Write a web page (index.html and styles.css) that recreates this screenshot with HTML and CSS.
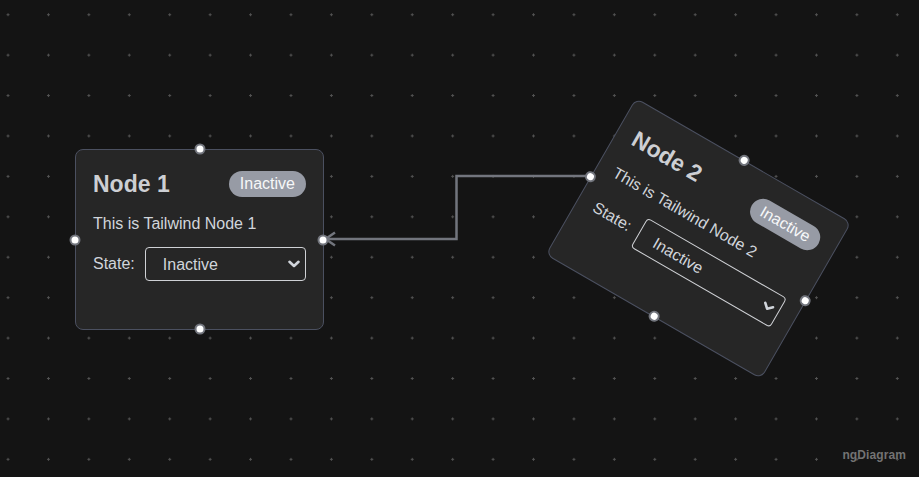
FILE: index.html
```html
<!DOCTYPE html>
<html lang="en">
<head>
  <meta charset="UTF-8">
  <meta name="viewport" content="width=device-width, initial-scale=1.0">
  <title>ngDiagram - Tailwind Nodes</title>
  <link rel="stylesheet" href="styles.css">
</head>
<body>
  <div class="canvas">
    <!-- Edge: Node 2 (left port) -> Node 1 (right port) -->
    <svg class="edges" width="919" height="477" viewBox="0 0 919 477">
      <path class="edge" d="M590 176 L456.5 176 L456.5 239 L325 239" />
      <path class="edge" d="M335 232.5 L325.5 239 L335 245.5" />
    </svg>

    <!-- Node 1 -->
    <div class="node node-1">
      <div class="node-header">
        <h3 class="node-title">Node 1</h3>
        <span class="badge">Inactive</span>
      </div>
      <p class="node-desc">This is Tailwind Node 1</p>
      <div class="state-row">
        <label for="state-1">State:</label>
        <div class="select-wrap">
          <select id="state-1">
            <option>Inactive</option>
            <option>Active</option>
          </select>
          <svg class="chevron" width="12" height="8" viewBox="0 0 12 8">
            <path d="M1.5 1.8 L6 6 L10.5 1.8" />
          </svg>
        </div>
      </div>
      <span class="port port-top"></span>
      <span class="port port-left"></span>
      <span class="port port-right"></span>
      <span class="port port-bottom"></span>
    </div>

    <!-- Node 2 (rotated) -->
    <div class="node node-2">
      <div class="node-header">
        <h3 class="node-title">Node 2</h3>
        <span class="badge">Inactive</span>
      </div>
      <p class="node-desc">This is Tailwind Node 2</p>
      <div class="state-row">
        <label for="state-2">State:</label>
        <div class="select-wrap">
          <select id="state-2">
            <option>Inactive</option>
            <option>Active</option>
          </select>
          <svg class="chevron" width="12" height="8" viewBox="0 0 12 8">
            <path d="M1.5 1.8 L6 6 L10.5 1.8" />
          </svg>
        </div>
      </div>
      <span class="port port-top"></span>
      <span class="port port-left"></span>
      <span class="port port-right"></span>
      <span class="port port-bottom"></span>
    </div>

    <div class="watermark">ngDiagram</div>
  </div>
</body>
</html>
```

FILE: styles.css
```css
body {
  margin: 0;
  padding: 0;
  font-family: "Liberation Sans", Arial, sans-serif;
  background: #141414;
}

.canvas {
  position: relative;
  width: 919px;
  height: 477px;
  overflow: hidden;
  background-color: #141414;
  background-image: radial-gradient(circle, #525252 0, #525252 1px, transparent 1.4px);
  background-size: 40.43px 40.43px;
  background-position: -12.2px -5.5px;
}

.edges {
  position: absolute;
  left: 0;
  top: 0;
}
.edge {
  fill: none;
  stroke: #72757d;
  stroke-width: 2.5;
  stroke-linejoin: miter;
}

/* nodes sit on the free canvas */
.node {
  position: absolute;
  box-sizing: border-box;
  width: 249px;
  height: 181px;
  padding: 17px 17px 0 17px;
  background: #262626;
  border: 1px solid #4b5060;
  border-radius: 8px;
  color: #d1d5db;
}
.node-1 {
  left: 75px;
  top: 149px;
}
.node-2 {
  left: 574px;
  top: 148px;
  transform: rotate(30deg);
}

.node-header {
  display: flex;
  justify-content: space-between;
  align-items: center;
  height: 34px;
}
.node-title {
  margin: 0;
  font-size: 23px;
  font-weight: bold;
  color: #cdcfd3;
}
.badge {
  height: 26px;
  line-height: 26px;
  padding: 0 11px;
  border-radius: 13px;
  background: #979ba5;
  color: #f6f7f8;
  font-size: 16px;
}

.node-desc {
  margin: 11px 0 0 0;
  font-size: 16px;
  line-height: 24px;
}

.state-row {
  display: flex;
  align-items: center;
  gap: 10px;
  margin-top: 11px;
  font-size: 16px;
}

.select-wrap {
  position: relative;
  flex: 1;
}
.select-wrap select {
  appearance: none;
  -webkit-appearance: none;
  box-sizing: border-box;
  width: 100%;
  height: 34px;
  padding: 0 0 0 17px;
  background: #262626;
  border: 1px solid #cfd1d5;
  border-radius: 4px;
  color: #d1d5db;
  font-family: inherit;
  font-size: 16px;
}
.chevron {
  position: absolute;
  right: 6px;
  top: 13px;
  pointer-events: none;
}
.chevron path {
  fill: none;
  stroke: #d1d5db;
  stroke-width: 2.6;
  stroke-linecap: round;
  stroke-linejoin: round;
}

.port {
  position: absolute;
  box-sizing: border-box;
  width: 11px;
  height: 11px;
  border-radius: 50%;
  background: #ffffff;
  border: 2.5px solid #72757d;
  transform: translate(-50%, -50%);
}
.port-top {
  left: 50%;
  top: -1px;
}
.port-bottom {
  left: 50%;
  top: 100%;
}
.port-left {
  left: -1px;
  top: 50%;
}
.port-right {
  left: 100%;
  top: 50%;
}

.watermark {
  position: absolute;
  right: 13px;
  bottom: 15px;
  font-size: 12px;
  font-weight: bold;
  color: #737373;
  letter-spacing: 0.1px;
}
```
